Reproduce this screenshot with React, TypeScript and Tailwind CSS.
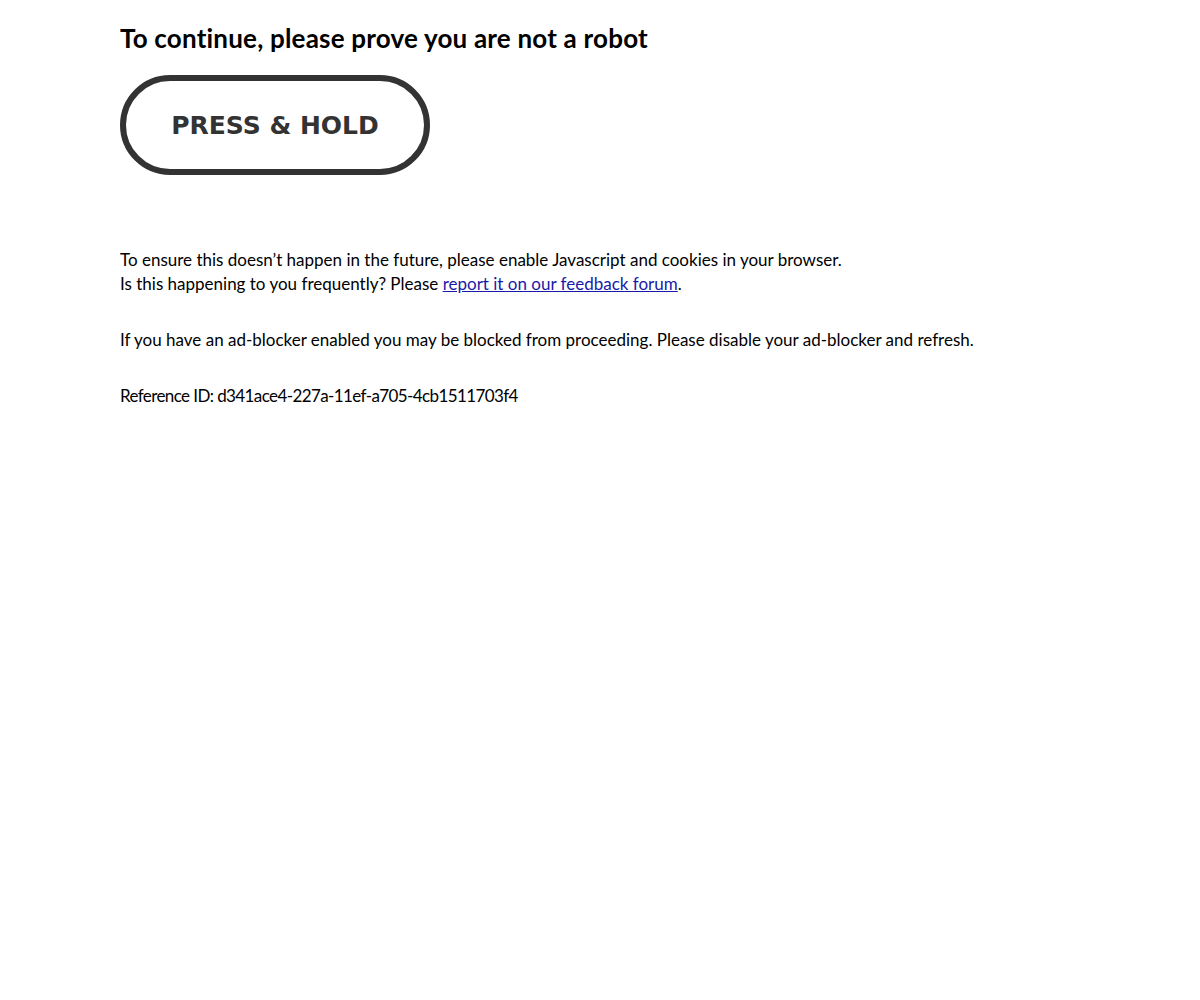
import React from "react";

const App: React.FC = () => {
  return (
    <div className="min-h-[1000px] bg-white pl-[120px] pt-[22px] font-['Lato','Noto_Sans',sans-serif] text-black">
      <h1 className="text-[26px] font-bold leading-[32px] tracking-[0.2px]">
        To continue, please prove you are not a robot
      </h1>

      {/* hold button */}
      <div className="mt-[21px] flex h-[100px] w-[310px] items-center justify-center rounded-full border-[6px] border-[#333333] bg-white">
        <span className="pt-[1px] font-['DejaVu_Sans',sans-serif] text-[25px] font-bold text-[#333333]">
          PRESS &amp; HOLD
        </span>
      </div>

      <div className="mt-[73px] text-[17px] leading-[24px]">
        <p>
          To ensure this doesn’t happen in the future, please enable Javascript and cookies in your browser.
          <br />
          Is this happening to you frequently? Please{" "}
          <a href="#" className="text-[#1a1aa8] underline">
            report it on our feedback forum
          </a>
          .
        </p>
        <p className="mt-[32px]">
          If you have an ad-blocker enabled you may be blocked from proceeding. Please disable your ad-blocker and refresh.
        </p>
        <p className="mt-[32px] tracking-[-0.6px]">Reference ID: d341ace4-227a-11ef-a705-4cb1511703f4</p>
      </div>
    </div>
  );
};

export default App;
